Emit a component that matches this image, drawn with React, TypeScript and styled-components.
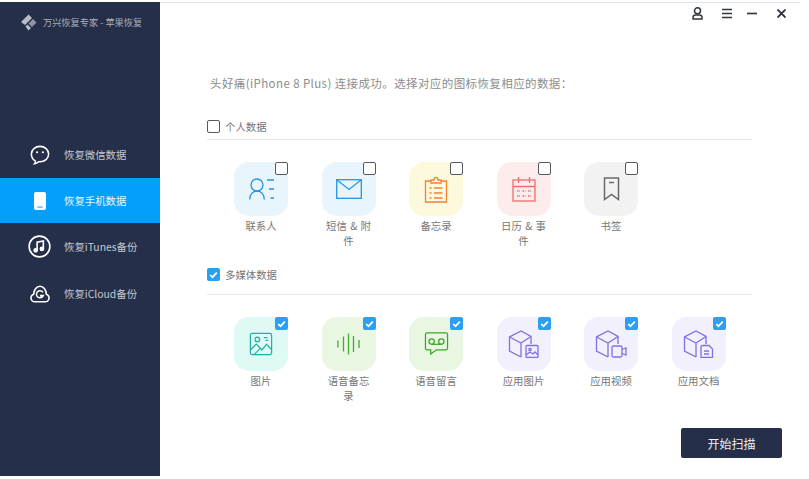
import React from "react";
import styled, { createGlobalStyle } from "styled-components";

const Global = createGlobalStyle`
  html, body { margin: 0; padding: 0; background: #fff; }
  body { font-family: "Noto Sans CJK SC", "Liberation Sans", sans-serif; overflow: hidden; }
  * { box-sizing: border-box; }
`;

const Page = styled.div`
  width: 800px;
  height: 479px;
  padding-top: 2px;
  padding-bottom: 3px;
  display: flex;
  background: #fff;
`;

const Sidebar = styled.aside`
  width: 160px;
  flex: none;
  background: #252f49;
  display: flex;
  flex-direction: column;
`;

const Brand = styled.div`
  height: 129px;
  flex: none;
  padding: 12px 0 0 20px;
  display: flex;
  align-items: flex-start;
  gap: 6px;
  color: #a8aebb;
  font-size: 9.2px;
  line-height: 16px;
  white-space: nowrap;
`;

const Nav = styled.nav`
  display: flex;
  flex-direction: column;
`;

const NavItem = styled.div<{ $active?: boolean }>`
  height: ${(p) => (p.$active ? 45 : 47)}px;
  display: flex;
  align-items: center;
  background: ${(p) => (p.$active ? "#02a0fb" : "transparent")};
  color: ${(p) => (p.$active ? "#e8f6ff" : "#c4c8d1")};
  font-size: 10.4px;
`;

const NavIcon = styled.span`
  width: 23px;
  margin: 0 13px 0 28px;
  flex: none;
  display: flex;
  justify-content: center;
  svg { display: block; }
`;

const Main = styled.main`
  flex: 1;
  min-width: 0;
  display: flex;
  flex-direction: column;
  position: relative;
  padding-right: 48px;
  border-top: 1px solid #e4e4e4;
`;

const WindowBar = styled.div`
  position: absolute;
  top: 4px;
  right: 14px;
  display: flex;
  align-items: center;
  gap: 15px;
  svg { display: block; }
  & > :nth-child(1) { margin-right: 4px; }
  & > :nth-child(3) { margin-right: 5px; }
`;

const Prompt = styled.p`
  margin: 70px 0 0 50px;
  color: #8c8c8c;
  font-size: 11.5px;
  line-height: 20px;
  white-space: nowrap;
  letter-spacing: 0.4px;
`;

const Section = styled.section<{ $top: number }>`
  margin: ${(p) => p.$top}px 0 0 47px;
`;

const SectionHead = styled.div<{ $height: number }>`
  height: ${(p) => p.$height}px;
  border-bottom: 1px solid #e8e8e8;
  display: flex;
  align-items: flex-start;
  gap: 5px;
  color: #777;
  font-size: 10.4px;
  line-height: 14px;
`;

const Box = styled.span<{ $checked?: boolean }>`
  width: 13px;
  height: 13px;
  flex: none;
  border-radius: 2px;
  border: ${(p) => (p.$checked ? "none" : "1.5px solid #55595f")};
  background: ${(p) => (p.$checked ? "#2d9ff3" : "#fff")};
  display: flex;
  align-items: center;
  justify-content: center;
  svg { display: block; }
`;

const Grid = styled.div`
  display: flex;
  padding: 22px 0 0 27px;
`;

const Item = styled.div`
  width: 87.5px;
  flex: none;
  display: flex;
  flex-direction: column;
  align-items: center;
  padding-right: 33.5px;
`;

const Tile = styled.div<{ $bg: string }>`
  width: 54px;
  height: 54px;
  flex: none;
  position: relative;
  border-radius: 15px;
  background: ${(p) => p.$bg};
  display: flex;
  align-items: center;
  justify-content: center;
  svg { display: block; }
`;

const TileBox = styled(Box)`
  position: absolute;
  top: 0;
  right: 0;
`;

const Label = styled.div`
  width: 50px;
  height: 31px;
  margin-top: 2px;
  color: #777;
  font-size: 10.4px;
  line-height: 15px;
  text-align: center;
  word-break: break-all;
  word-spacing: 1px;
`;

const Footer = styled.div`
  position: absolute;
  right: 18px;
  bottom: 18px;
`;

const ScanButton = styled.button`
  display: block;
  width: 101px;
  height: 30px;
  border: none;
  border-radius: 2px;
  background: #252f49;
  color: #eef0f4;
  font: 12px "Noto Sans CJK SC", sans-serif;
  padding: 0;
`;

const Check = () => (
  <svg width="9" height="8" viewBox="0 0 9 8" fill="none">
    <path d="M1.2 4 3.5 6.2 7.8 1.6" stroke="#fff" strokeWidth="1.7" />
  </svg>
);

const Logo = () => (
  <svg width="17" height="17" viewBox="0 0 17 17" fill="#b9bdc6">
    <path d="M8.5 0.5 12 4 5 11 1 8Z" />
    <path d="M13 5 16.500 8.500 12 13 8.500 9.500Z" fill="#8f95a3" />
    <path d="M7.500 10.500 11 14 8.500 16.500 5.500 12.500Z" />
  </svg>
);

const WeChat = () => (
  <svg width="20" height="20" viewBox="0 0 22 22" fill="none" stroke="#fff" strokeWidth="1.700">
    <path d="M11 1.500c5.200 0 9.500 3.700 9.500 8.500s-4.300 8.500-9.500 8.500H9.500c-1 1-2.500 2-4.500 2.200.7-.9 1-1.800 1-3C3.300 16.200 1.500 13.300 1.500 10c0-4.800 4.300-8.500 9.500-8.500Z" />
    <circle cx="7.800" cy="8" r="1.200" fill="#fff" stroke="none" />
    <circle cx="14.200" cy="8" r="1.200" fill="#fff" stroke="none" />
  </svg>
);

const Phone = () => (
  <svg width="12" height="18" viewBox="0 0 12 18" fill="none">
    <rect x="0" y="0" width="12" height="18" rx="2" fill="#fff" />
    <rect x="3.500" y="14.500" width="5" height="1.100" fill="#02a0fb" />
  </svg>
);

const Music = () => (
  <svg width="23" height="23" viewBox="0 0 24 24" fill="none" stroke="#fff" strokeWidth="1.700">
    <circle cx="12" cy="12" r="10.800" />
    <path d="M9.500 16V7.500l6.500-1.200V14.500" />
    <circle cx="8" cy="16" r="1.600" fill="#fff" />
    <circle cx="14.500" cy="14.500" r="1.600" fill="#fff" />
  </svg>
);

const Cloud = () => (
  <svg width="20" height="18" viewBox="0 0 20 18" fill="none" stroke="#fff" strokeWidth="1.600">
    <path d="M5 16.800h10c2.300 0 4-1.700 4-3.900 0-1.800-1.100-3.200-2.600-3.700C16 4.800 13.400 1.200 10 1.200S4 4.800 3.600 9.200C2.100 9.700 1 11.100 1 12.900c0 2.200 1.700 3.900 4 3.900Z" />
    <path d="M13 7.300C12.300 6.400 11.200 5.800 10 5.800A3.500 3.500 0 0 0 6.500 9.300 3.500 3.500 0 0 0 10 12.800c1.500 0 2.700-.9 3.200-2.200H10" />
  </svg>
);

const stroke = (c: string) => ({ fill: "none", stroke: c, strokeWidth: 1.3 });

const Contact = () => (
  <svg width="25" height="22" viewBox="0 0 25 22" {...stroke("#2393e6")}>
    <circle cx="8" cy="7" r="6" />
    <path d="M.7 21.500c0-4.800 3-8.500 7.300-8.500s7.300 3.700 7.300 8.500" />
    <path d="M18 2h7M20 11h5M21.500 20h3.500" />
  </svg>
);

const Mail = () => (
  <svg width="26" height="20" viewBox="0 0 26 20" {...stroke("#2396e8")}>
    <rect x=".7" y=".7" width="24.600" height="18.600" />
    <path d="M.7 .7 13 10.500 25.300 .7" />
  </svg>
);

const Notes = () => (
  <svg width="24" height="27" viewBox="0 0 24 27" {...stroke("#ee8136")}>
    <path d="M7 5H1.500v21h21V5H17" />
    <path d="M7 7V4h3c0-3.500 4-3.500 4 0h3v3Z" />
    <path d="M5.500 12h2M10 12h8.500M5.500 17h2M10 17h8.500M5.500 22h2M10 22h8.500" />
  </svg>
);

const Calendar = () => (
  <svg width="24" height="26" viewBox="0 0 24 26" {...stroke("#ee6f68")}>
    <rect x="1" y="4" width="22" height="21" />
    <path d="M1 10.500h22M6.500 1v6M17.500 1v6" />
    <path d="M5 15h3M10.500 15h3M16 15h3M5 20h3M10.500 20h3M16 20h3" strokeDasharray="1.500 .8" />
  </svg>
);

const Bookmark = () => (
  <svg width="17" height="24" viewBox="0 0 17 24" fill="none" stroke="#67696c" strokeWidth="1.500">
    <path d="M1.500 1h14v21.500l-7-5-7 5Z" />
    <path d="M6 5.500h5" />
  </svg>
);

const Photo = () => (
  <svg width="24" height="24" viewBox="0 0 26 26" {...stroke("#1fb0a7")}>
    <rect x="1.500" y="1.500" width="23" height="23" rx="2" />
    <circle cx="9" cy="8" r="2.500" />
    <path d="M16 6h4M18 9h3" />
    <path d="M1.500 19.500 8 13l6 6.500 5-6 5.500 5.500M6 24l6-6" />
  </svg>
);

const Wave = () => (
  <svg width="23" height="22" viewBox="0 0 23 22" {...stroke("#46ab2e")}>
    <path d="M1 7.500v7M6.500 3.500v15M11.500 .5v21M16.500 3v16M22 7v8" />
  </svg>
);

const Voicemail = () => (
  <svg width="25" height="24" viewBox="0 0 26 25" {...stroke("#3aa826")}>
    <path d="M3 1h20a1.500 1.500 0 0 1 1.500 1.500V17a1.500 1.500 0 0 1-1.500 1.500H13L7 23v-4.500H3A1.500 1.500 0 0 1 1.500 17V2.500A1.500 1.500 0 0 1 3 1Z" />
    <circle cx="8" cy="10" r="2.800" />
    <circle cx="18" cy="10" r="2.800" />
    <path d="M8 12.800h10" />
  </svg>
);

const Cube = ({ children }: { children: React.ReactNode }) => (
  <svg width="32" height="28" viewBox="0 0 32 28" {...stroke("#7f72e2")}>
    <path d="M13 27 1.500 21V7L13 1l10 5.500V14" />
    <path d="M1.500 7 13 13l10-6.500M13 13v14" />
    {children}
  </svg>
);

const CubeImage = () => (
  <Cube>
    <rect x="18" y="15.500" width="12" height="12" rx="1" fill="#f1f0fc" />
    <circle cx="22" cy="19.500" r="1.200" />
    <path d="M18 25l4-3 3 2 2-2 3 3" />
  </Cube>
);
const CubeVideo = () => (
  <Cube>
    <rect x="17" y="16" width="10" height="11" rx="1.500" fill="#f1f0fc" />
    <path d="M27 19.500 31 18v7l-4-1.500" />
  </Cube>
);
const CubeDoc = () => (
  <Cube>
    <path d="M20 15.500h6l3.500 3.500v8.500H18V17.500a2 2 0 0 1 2-2Z" fill="#f1f0fc" />
    <path d="M21 21h5M21 24h5" />
  </Cube>
);

const IconUser = () => (
  <svg width="11" height="13" viewBox="0 0 11 13" fill="none" stroke="#33373e" strokeWidth="1.500">
    <circle cx="5.500" cy="3.800" r="3" />
    <path d="M1 12V10.300C1 8.800 2 8 3.500 8h4C9 8 10 8.800 10 10.300V12Z" />
  </svg>
);
const IconMenu = () => (
  <svg width="10" height="11" viewBox="0 0 10 11" stroke="#33373e" strokeWidth="1.500">
    <path d="M0 1.500h10M0 5.500h10M0 9.500h10" />
  </svg>
);
const IconMin = () => (
  <svg width="10" height="11" viewBox="0 0 10 11" stroke="#33373e" strokeWidth="1.700">
    <path d="M0 5.500h10" />
  </svg>
);
const IconClose = () => (
  <svg width="9" height="9" viewBox="0 0 9 9" stroke="#2b2f36" strokeWidth="1.800">
    <path d="M.5 .5l8 8M8.500 .5l-8 8" />
  </svg>
);

type Entry = { label: string; bg: string; icon: React.ReactNode };

const personal: Entry[] = [
  { label: "联系人", bg: "#e8f5fd", icon: <Contact /> },
  { label: "短信 & 附件", bg: "#e8f5fd", icon: <Mail /> },
  { label: "备忘录", bg: "#fdf9dc", icon: <Notes /> },
  { label: "日历 & 事件", bg: "#fdecec", icon: <Calendar /> },
  { label: "书签", bg: "#f2f2f2", icon: <Bookmark /> },
];

const media: Entry[] = [
  { label: "图片", bg: "#dff9f4", icon: <Photo /> },
  { label: "语音备忘录", bg: "#e9f6e2", icon: <Wave /> },
  { label: "语音留言", bg: "#e9f6e2", icon: <Voicemail /> },
  { label: "应用图片", bg: "#f1f0fc", icon: <CubeImage /> },
  { label: "应用视频", bg: "#f1f0fc", icon: <CubeVideo /> },
  { label: "应用文档", bg: "#f1f0fc", icon: <CubeDoc /> },
];

const Items = ({ list, checked }: { list: Entry[]; checked?: boolean }) => (
  <>
    {list.map((e) => (
      <Item key={e.label}>
        <Tile $bg={e.bg}>
          {e.icon}
          <TileBox $checked={checked}>{checked && <Check />}</TileBox>
        </Tile>
        <Label>{e.label}</Label>
      </Item>
    ))}
  </>
);

export default function App() {
  return (
    <Page>
      <Global />
      <Sidebar>
        <Brand>
          <Logo />
          <span>万兴恢复专家 - 苹果恢复</span>
        </Brand>
        <Nav>
          <NavItem><NavIcon><WeChat /></NavIcon>恢复微信数据</NavItem>
          <NavItem $active><NavIcon><Phone /></NavIcon>恢复手机数据</NavItem>
          <NavItem><NavIcon><Music /></NavIcon>恢复iTunes备份</NavItem>
          <NavItem><NavIcon><Cloud /></NavIcon>恢复iCloud备份</NavItem>
        </Nav>
      </Sidebar>
      <Main>
        <WindowBar>
          <IconUser />
          <IconMenu />
          <IconMin />
          <IconClose />
        </WindowBar>
        <Prompt>头好痛(iPhone 8 Plus) 连接成功。选择对应的图标恢复相应的数据：</Prompt>
        <Section $top={27}>
          <SectionHead $height={20}>
            <Box />
            个人数据
          </SectionHead>
          <Grid>
            <Items list={personal} />
          </Grid>
        </Section>
        <Section $top={19}>
          <SectionHead $height={27}>
            <Box $checked><Check /></Box>
            多媒体数据
          </SectionHead>
          <Grid>
            <Items list={media} checked />
          </Grid>
        </Section>
        <Footer>
          <ScanButton>开始扫描</ScanButton>
        </Footer>
      </Main>
    </Page>
  );
}
